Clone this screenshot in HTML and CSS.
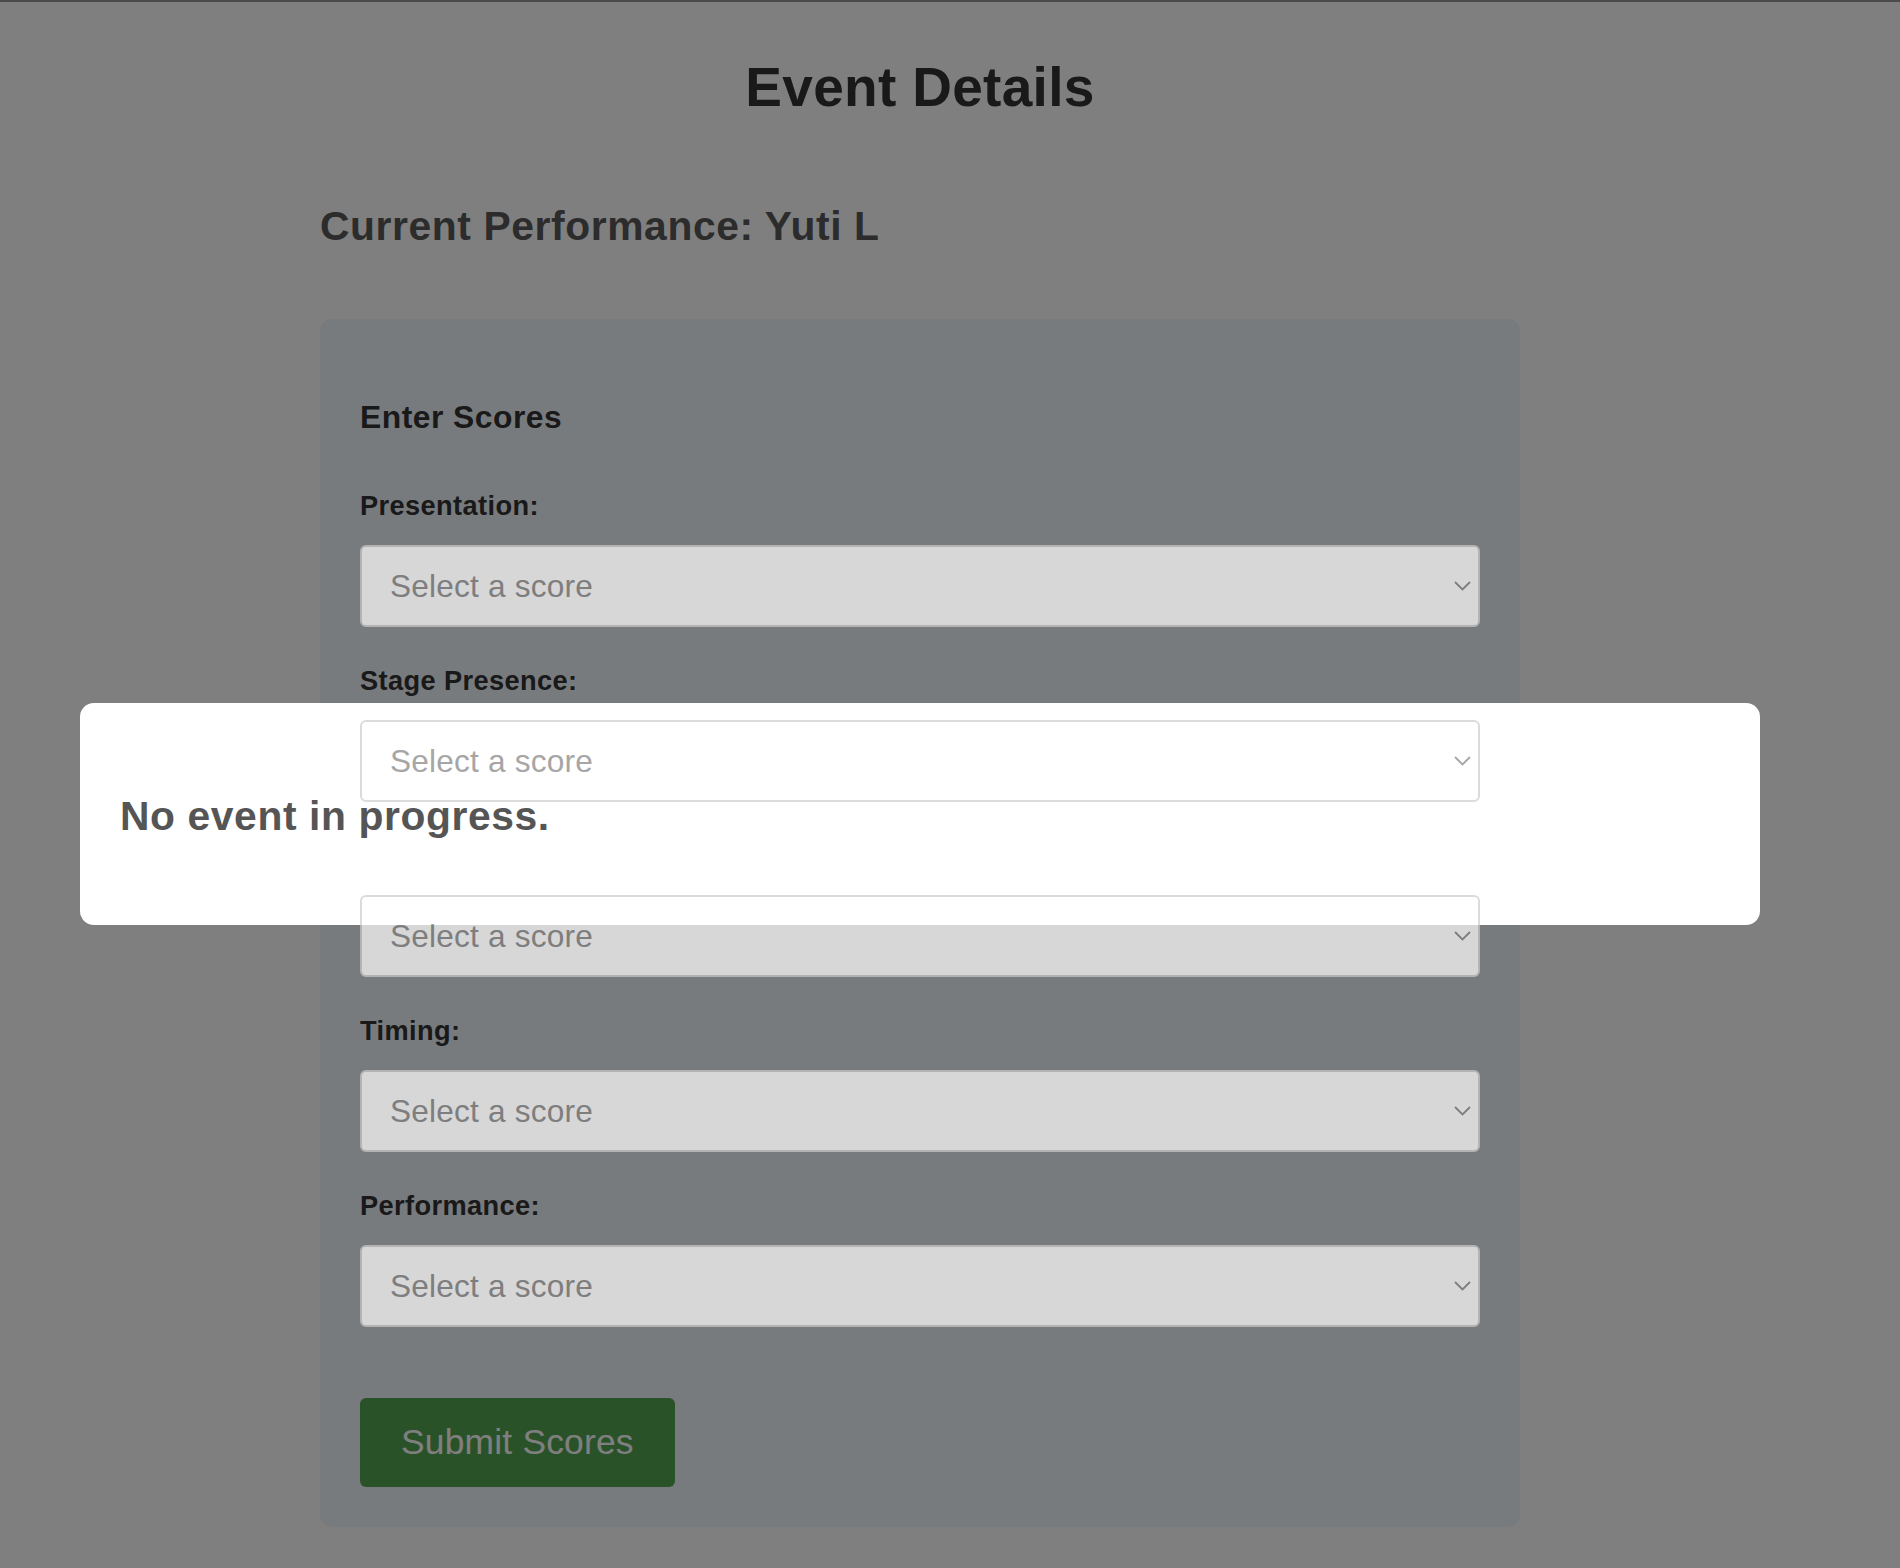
FILE: index.html
```html
<!DOCTYPE html>
<html lang="en">
<head>
<meta charset="utf-8">
<title>Event Details</title>
<link rel="stylesheet" href="styles.css">
</head>
<body>
<div class="page">
  <main class="container">
    <h1 class="title">Event Details</h1>
    <h2 class="current">Current Performance: Yuti L</h2>
    <section class="card">
      <h3 class="card-title">Enter Scores</h3>
      <form class="score-form">
        <div class="form-group">
          <label class="label">Presentation:</label>
          <div class="select-wrap">
            <select class="select"><option>Select a score</option></select>
            <svg class="chevron" width="17" height="10" viewBox="0 0 17 10"><path d="M1 1 L8.5 8.5 L16 1" fill="none" stroke="currentColor" stroke-width="1.8"/></svg>
          </div>
        </div>
        <div class="form-group">
          <label class="label">Stage Presence:</label>
          <div class="select-wrap">
            <select class="select"><option>Select a score</option></select>
            <svg class="chevron" width="17" height="10" viewBox="0 0 17 10"><path d="M1 1 L8.5 8.5 L16 1" fill="none" stroke="currentColor" stroke-width="1.8"/></svg>
          </div>
        </div>
        <div class="form-group">
          <label class="label">Creativity:</label>
          <div class="select-wrap">
            <select class="select"><option>Select a score</option></select>
            <svg class="chevron" width="17" height="10" viewBox="0 0 17 10"><path d="M1 1 L8.5 8.5 L16 1" fill="none" stroke="currentColor" stroke-width="1.8"/></svg>
          </div>
        </div>
        <div class="form-group">
          <label class="label">Timing:</label>
          <div class="select-wrap">
            <select class="select"><option>Select a score</option></select>
            <svg class="chevron" width="17" height="10" viewBox="0 0 17 10"><path d="M1 1 L8.5 8.5 L16 1" fill="none" stroke="currentColor" stroke-width="1.8"/></svg>
          </div>
        </div>
        <div class="form-group">
          <label class="label">Performance:</label>
          <div class="select-wrap">
            <select class="select"><option>Select a score</option></select>
            <svg class="chevron" width="17" height="10" viewBox="0 0 17 10"><path d="M1 1 L8.5 8.5 L16 1" fill="none" stroke="currentColor" stroke-width="1.8"/></svg>
          </div>
        </div>
        <button type="button" class="submit">Submit Scores</button>
      </form>
    </section>
  </main>
</div>
<div class="overlay"></div>
<div class="modal">
  <h2 class="modal-text">No event in progress.</h2>
</div>
</body>
</html>
```

FILE: styles.css
```css
html, body {
  margin: 0;
  padding: 0;
}

body {
  background: #ffffff;
  border-top: 2px solid #969696;
  font-family: "Liberation Sans", Arial, Helvetica, sans-serif;
  color: #333333;
}

.page {
  width: 1840px;
}

.container {
  width: 1200px;
  margin: 0 auto;
  padding-bottom: 30px;
}

.title {
  margin: 53px 0 0;
  font-size: 55px;
  line-height: 64px;
  font-weight: 700;
  letter-spacing: 0.3px;
  text-align: center;
  color: #333333;
}

.current {
  margin: 84px 0 0;
  font-size: 40.8px;
  line-height: 47px;
  font-weight: 700;
  letter-spacing: 0.6px;
  color: #585858;
}

.card {
  margin-top: 69px;
  box-sizing: border-box;
  width: 1200px;
  padding: 40px;
  background: #f0f6fc;
  border-radius: 12px;
}

.card-title {
  margin: 40px 0 0;
  font-size: 31.8px;
  line-height: 37px;
  font-weight: 700;
  letter-spacing: 0.5px;
  color: #333333;
}

.score-form {
  margin-top: 54px;
  display: flex;
  flex-direction: column;
  align-items: flex-start;
}

.form-group {
  width: 100%;
  display: flex;
  flex-direction: column;
  margin-bottom: 38px;
}

.label {
  font-size: 27.2px;
  line-height: 31px;
  font-weight: 700;
  letter-spacing: 0.4px;
  color: #333333;
  margin-bottom: 24px;
}

.select-wrap {
  position: relative;
  z-index: 30;
  opacity: 0.7;
  color: #808080;
}

.select {
  display: block;
  width: 100%;
  height: 82px;
  box-sizing: border-box;
  margin: 0;
  padding: 0 40px 0 28px;
  border: 2px solid #cccccc;
  border-radius: 6px;
  background: #ffffff;
  color: #808080;
  font-family: "Liberation Sans", Arial, Helvetica, sans-serif;
  font-size: 31.6px;
  letter-spacing: 0.2px;
  appearance: none;
  -webkit-appearance: none;
  outline: none;
}

.chevron {
  position: absolute;
  right: 9px;
  top: 50%;
  margin-top: -5px;
  color: #808080;
}

.submit {
  margin-top: 33px;
  height: 89px;
  padding: 0 41px;
  border: none;
  border-radius: 6px;
  background: #54a452;
  color: #ffffff;
  font-family: "Liberation Sans", Arial, Helvetica, sans-serif;
  font-size: 35.4px;
  letter-spacing: 0.2px;
  line-height: 1;
}

.overlay {
  position: fixed;
  inset: 0;
  background: rgba(0, 0, 0, 0.5);
  z-index: 10;
}

.modal {
  position: fixed;
  top: 703px;
  left: 80px;
  width: 1680px;
  box-sizing: border-box;
  padding: 40px;
  background: #ffffff;
  border-radius: 14px;
  z-index: 20;
}

.modal-text {
  margin: 50px 0 45px;
  font-size: 40.8px;
  line-height: 47px;
  font-weight: 700;
  letter-spacing: 0.6px;
  color: #555555;
}
```
